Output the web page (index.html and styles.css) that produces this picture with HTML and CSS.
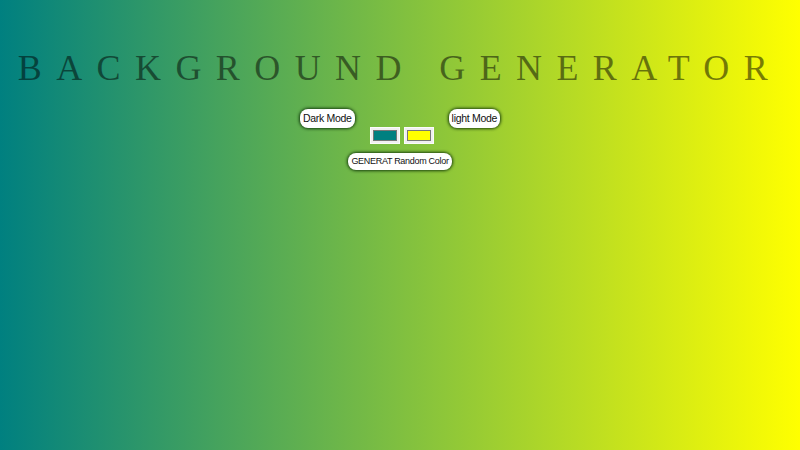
FILE: index.html
```html
<!DOCTYPE html>
<html>
<head>
<meta charset="utf-8">
<title>Background Generator</title>
<link rel="stylesheet" href="styles.css">
</head>
<body>
<div class="page">
  <h1 class="title">Background Generator</h1>
  <div class="controls">
    <button class="btn btn-mode">Dark Mode</button>
    <div class="pickers">
      <input class="picker" type="color" value="#008080">
      <input class="picker" type="color" value="#ffff00">
    </div>
    <button class="btn btn-mode">light Mode</button>
  </div>
  <div class="random-row">
    <button class="btn btn-random">GENERAT Random Color</button>
  </div>
</div>
</body>
</html>
```
FILE: styles.css
```css
html, body {
  margin: 0;
  padding: 0;
  height: 100%;
}
body {
  background: linear-gradient(to right, #008080, #ffff00);
  font-family: "Liberation Sans", Arial, sans-serif;
}
.page {
  display: flex;
  flex-direction: column;
  align-items: center;
}
.title {
  margin: 0;
  padding-top: 48px;
  font-family: "Liberation Serif", "Times New Roman", serif;
  font-weight: normal;
  font-size: 36px;
  line-height: 40px;
  letter-spacing: 0.4em;
  text-transform: uppercase;
  color: rgba(0, 0, 0, 0.5);
  text-align: center;
  white-space: nowrap;
}
.controls {
  display: flex;
  align-items: flex-start;
  gap: 15px;
  margin-top: 21px;
}
.pickers {
  display: flex;
  gap: 4px;
  margin-top: 18px;
}
.btn {
  font-family: "Liberation Sans", Arial, sans-serif;
  color: #111;
  background: #fff;
  border: none;
  border-radius: 8px;
  box-shadow: 0 0 3px 1px rgba(0, 35, 0, 0.8);
  cursor: pointer;
  white-space: nowrap;
}
.btn-mode {
  font-size: 10.5px;
  letter-spacing: -0.3px;
  line-height: 13px;
  padding: 3px 3px;
}
.btn-random {
  font-size: 9px;
  letter-spacing: -0.3px;
  line-height: 11px;
  padding: 3px 3px;
}
.picker {
  -webkit-appearance: none;
  appearance: none;
  width: 30px;
  height: 17px;
  padding: 0;
  margin: 0;
  border: 1px solid rgba(255, 255, 255, 0.7);
  background: #f0f0f0;
  box-sizing: border-box;
}
.picker::-webkit-color-swatch-wrapper {
  padding: 2px 2px;
}
.picker::-webkit-color-swatch {
  border: 1px solid #777;
}
.random-row {
  display: flex;
  margin-top: 9px;
}
```
